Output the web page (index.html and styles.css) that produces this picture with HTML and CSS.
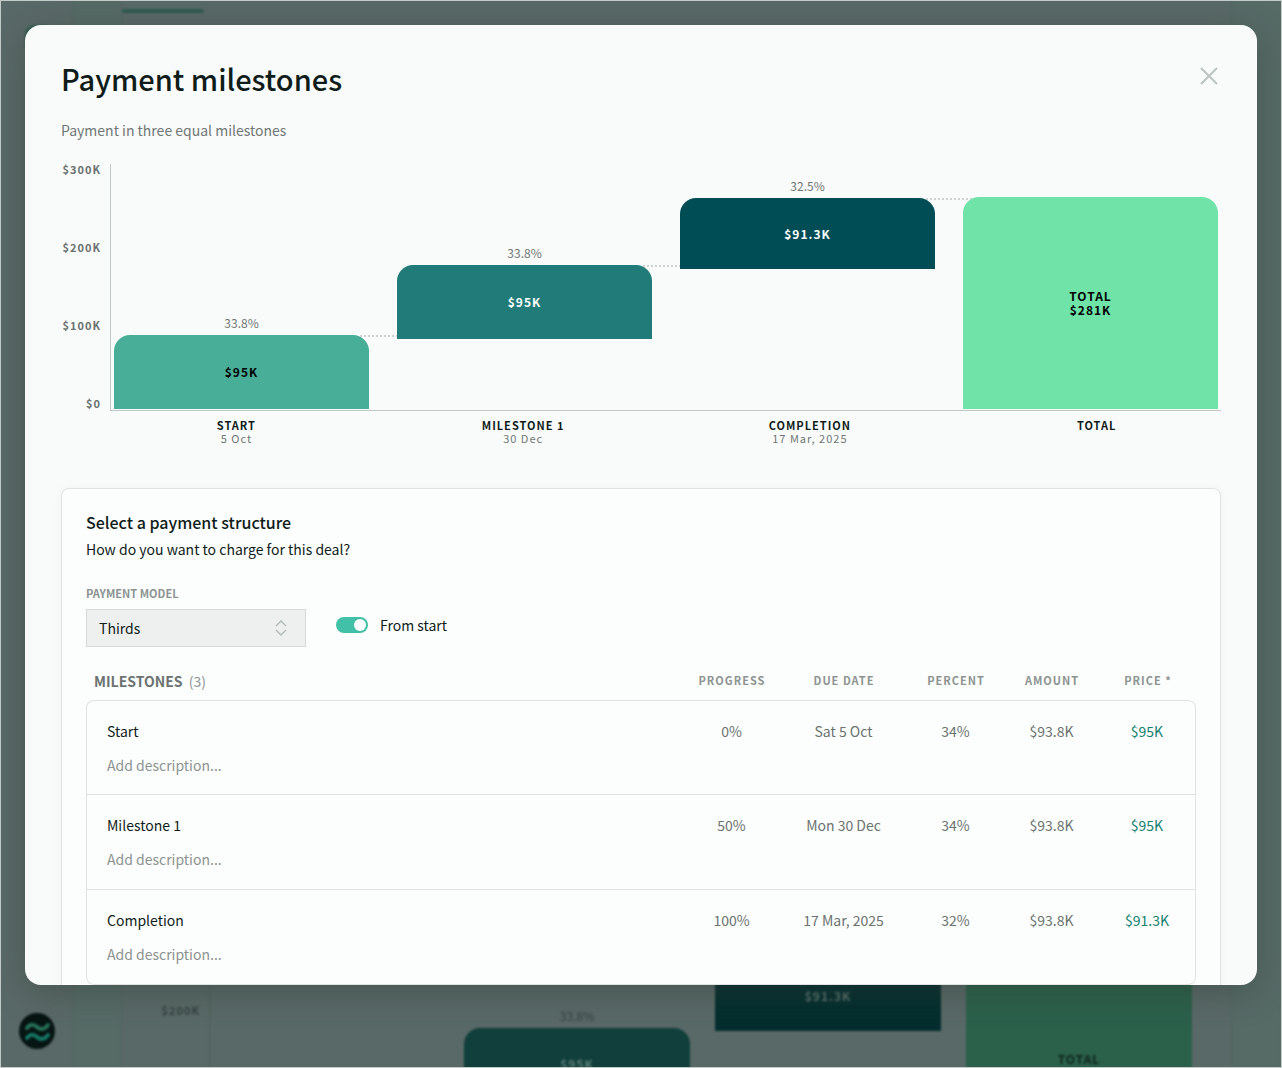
FILE: index.html
```html
<!DOCTYPE html>
<html lang="en">
<head>
<meta charset="utf-8">
<meta name="viewport" content="width=device-width, initial-scale=1">
<title>Payment milestones</title>
<link rel="stylesheet" href="styles.css">
</head>
<body>
<div class="stage">
  <div class="page" aria-hidden="true">
    <div class="page-rail">
      <div class="page-rail-top"></div>
      <svg class="page-logo" viewBox="0 0 36 36">
        <circle cx="18" cy="18" r="18" fill="#061412"/>
        <g fill="none" stroke-width="4" stroke-linecap="round">
          <path d="M8 15c4-5 8-3 10-1s7 4 11-2" stroke="#256f55"/>
          <path d="M8 25c4-5 8-3 10-1s7 4 11-2" stroke="#147563"/>
        </g>
      </svg>
    </div>
    <div class="page-gutter"></div>
    <div class="page-main">
      <div class="page-tab"></div>
      <div class="page-chart">
        <div class="page-axis">$200K</div>
        <div class="page-plot">
          <div class="page-col"></div>
          <div class="page-col page-col-mid"><span class="page-pct">33.8%</span><div class="page-bar page-bar-mid">$95K</div></div>
          <div class="page-col page-col-dark"><div class="page-bar page-bar-dark">$91.3K</div></div>
          <div class="page-col"><div class="page-bar page-bar-total">TOTAL</div></div>
        </div>
      </div>
    </div>
    <div class="page-edge"></div>
  </div>

  <div class="overlay">
    <section class="dialog" role="dialog" aria-modal="true" aria-labelledby="dialog-title">
      <header class="dialog-head">
        <h1 class="dialog-title" id="dialog-title">Payment milestones</h1>
        <button class="close" type="button" aria-label="Close">
          <svg viewBox="0 0 24 24" width="24" height="24"><path d="M4 4l16 16M20 4L4 20" fill="none" stroke="#bcc4c1" stroke-width="2"/></svg>
        </button>
      </header>
      <p class="dialog-sub">Payment in three equal milestones</p>

      <div class="chart">
        <div class="y-axis"><span>$300K</span><span>$200K</span><span>$100K</span><span>$0</span></div>
        <div class="plot">
          <div class="col linked"><span class="pct">33.8%</span><div class="bar bar-start" style="height:74px">$95K</div></div>
          <div class="col linked" style="padding-bottom:70px"><span class="pct">33.8%</span><div class="bar bar-mid" style="height:74px">$95K</div></div>
          <div class="col linked" style="padding-bottom:140px"><span class="pct">32.5%</span><div class="bar bar-end" style="height:71px">$91.3K</div></div>
          <div class="col"><div class="bar bar-total" style="height:212px"><span>TOTAL</span><span>$281K</span></div></div>
        </div>
        <div class="x-axis">
          <div class="x-label"><b>START</b><span>5 Oct</span></div>
          <div class="x-label"><b>MILESTONE 1</b><span>30 Dec</span></div>
          <div class="x-label"><b>COMPLETION</b><span>17 Mar, 2025</span></div>
          <div class="x-label"><b>TOTAL</b></div>
        </div>
      </div>

      <section class="panel">
        <h2 class="panel-title">Select a payment structure</h2>
        <p class="panel-text">How do you want to charge for this deal?</p>
        <form class="controls">
          <div class="field">
            <label class="field-label" for="model">PAYMENT MODEL</label>
            <div class="select-wrap">
              <select class="select" id="model"><option>Thirds</option></select>
              <svg class="select-icon" viewBox="0 0 12 16" width="12" height="16"><path d="M1 6l5-5 5 5M1 10l5 5 5-5" fill="none" stroke="#b3bbb8" stroke-width="1.4"/></svg>
            </div>
          </div>
          <label class="switch"><input class="switch-input" type="checkbox" checked>From start</label>
        </form>
        <table class="milestones">
          <thead>
            <tr>
              <th class="c-name">MILESTONES <span class="count">(3)</span></th>
              <th class="c-num">PROGRESS</th><th class="c-date">DUE DATE</th><th class="c-num">PERCENT</th><th class="c-num">AMOUNT</th><th class="c-num">PRICE *</th>
            </tr>
          </thead>
          <tbody>
            <tr>
              <td class="name">Start<input class="desc" type="text" placeholder="Add description..." aria-label="Description of Start"></td>
              <td>0%</td><td>Sat 5 Oct</td><td>34%</td><td>$93.8K</td><td class="price">$95K</td>
            </tr>
            <tr>
              <td class="name">Milestone 1<input class="desc" type="text" placeholder="Add description..." aria-label="Description of Milestone 1"></td>
              <td>50%</td><td>Mon 30 Dec</td><td>34%</td><td>$93.8K</td><td class="price">$95K</td>
            </tr>
            <tr>
              <td class="name">Completion<input class="desc" type="text" placeholder="Add description..." aria-label="Description of Completion"></td>
              <td>100%</td><td>17 Mar, 2025</td><td>32%</td><td>$93.8K</td><td class="price">$91.3K</td>
            </tr>
          </tbody>
        </table>
      </section>
    </section>
  </div>
</div>
</body>
</html>
```
FILE: styles.css
```css
* { box-sizing: border-box; }

body {
  margin: 0;
  font-family: "Noto Sans CJK SC", "Open Sans", sans-serif;
  font-size: 14px;
  line-height: 24px;
  color: #0f1c19;
}

h1, h2, p { margin: 0; }
b { font-weight: 700; }

/* The dimmed page and the dialog share one grid cell */
.stage {
  display: grid;
  grid-template: 100vh / 100%;
  border: 1px solid #c3cac7;
  height: 100vh;
  overflow: hidden;
  background: #596967;
}
.page, .overlay { grid-area: 1 / 1; min-height: 0; }

/* Dimmed page */
.page {
  display: grid;
  grid-template-columns: 72px 49px 1fr 50px;
  height: calc(100vh - 2px);
  filter: blur(1px);
}
.page-rail {
  display: flex;
  flex-direction: column;
  justify-content: space-between;
  padding: 24px 0 18px 18px;
}
.page-rail-top { width: 30px; height: 30px; border-radius: 10px; background: #2c5a4c; margin-left: 6px; }
.page-logo { width: 36px; height: 36px; }
.page-gutter { background: #566a66; border: solid #52645f; border-width: 0 1px; }
.page-main {
  display: flex;
  flex-direction: column;
  justify-content: space-between;
}
.page-tab { width: 82px; height: 4px; margin-top: 8px; background: #305a50; border-radius: 2px; }
.page-chart { display: grid; grid-template-columns: 88px 1fr; height: 120px; }
.page-axis {
  padding: 51px 9px 0 0;
  border-right: 1px solid #4e5f5a;
  font-size: 11px;
  font-weight: 700;
  letter-spacing: 1px;
  text-align: right;
  color: #34423f;
}
.page-plot {
  display: grid;
  grid-template-columns: repeat(4, 1fr);
  gap: 25px;
  padding: 0 39px 0 3px;
}
.page-col { display: flex; flex-direction: column; align-items: center; font-size: 12px; color: #34423f; }
.page-col-mid { padding-top: 57px; }
.page-bar {
  display: flex;
  justify-content: center;
  width: 100%;
  flex: 1;
  font-weight: 700;
  letter-spacing: 1px;
}
.page-bar-mid { padding-top: 24px; border-radius: 16px 16px 0 0; background: #113f3b; color: #5e7f79; }
.page-bar-dark { flex: none; height: 84px; padding-top: 37px; background: #042d2e; color: #58706c; }
.page-bar-total { padding-top: 100px; background: #2b604b; color: #0c241c; }
.page-edge { background: #566a66; border-left: 1px solid #52645f; }

/* Dialog */
.overlay { position: relative; z-index: 1; padding: 24px; }
.dialog {
  height: calc(100vh - 108px);
  padding: 36px;
  overflow-y: auto;
  scrollbar-width: none;
  border-radius: 16px;
  background: #f9fbfa;
  box-shadow: 0 8px 32px rgba(50, 60, 50, .4);
}
.dialog-head { display: flex; justify-content: space-between; align-items: flex-start; }
.dialog-title { font-size: 29px; line-height: 34px; font-weight: 500; }
.close {
  display: flex;
  margin-top: 3px;
  padding: 0;
  border: 0;
  background: none;
  cursor: pointer;
}
.dialog-sub { margin-top: 23px; color: #707775; }

/* Waterfall chart */
.chart {
  display: grid;
  grid-template-columns: 49px 1fr;
  margin-top: 22px;
}
.y-axis {
  display: flex;
  flex-direction: column;
  justify-content: space-between;
  padding: 0 9px 2px 0;
  text-align: right;
  font-size: 11px;
  line-height: 11px;
  font-weight: 700;
  letter-spacing: 1px;
  color: #6b7270;
}
.plot {
  display: grid;
  grid-template-columns: repeat(4, 1fr);
  gap: 28px;
  height: 247px;
  padding: 0 3px 1px;
  border: solid #c2c8c5;
  border-width: 0 0 1px 1px;
}
.col {
  display: flex;
  flex-direction: column;
  justify-content: flex-end;
  align-items: center;
}
.pct { font-size: 12px; line-height: 16px; margin-bottom: 4px; color: #707775; }
.bar {
  position: relative;
  z-index: 1;
  display: flex;
  flex-direction: column;
  justify-content: center;
  align-items: center;
  width: 100%;
  border-radius: 16px 16px 0 0;
  font-size: 12px;
  line-height: 14px;
  font-weight: 700;
  letter-spacing: 1px;
}
.linked .bar::after {
  content: "";
  position: absolute;
  z-index: -1;
  top: 0;
  left: calc(100% - 9px);
  width: 37px;
  height: 2px;
  background: repeating-linear-gradient(90deg, #cdd2d0 0 2px, transparent 2px 4px);
}
.linked:nth-child(3) .bar::after { width: 47px; }
.bar-start { background: #48ae98; color: #000; }
.bar-mid { background: #217c79; color: #fff; }
.bar-end { background: #004d56; color: #fff; }
.bar-total { background: #70e3a9; color: #000; }
.x-axis {
  grid-column: 2;
  display: grid;
  grid-template-columns: repeat(4, 1fr);
  margin: 8px -19px 0 -17px;
}
.x-label {
  display: flex;
  flex-direction: column;
  align-items: center;
  font-size: 11px;
  line-height: 13px;
  letter-spacing: 1px;
}
.x-label span { color: #707775; }

/* Payment structure */
.panel {
  margin-top: 43px;
  padding: 24px;
  border: 1px solid #dfe4e2;
  border-radius: 8px;
  background: #fcfefd;
  box-shadow: 0 0 8px rgba(0, 0, 0, .04);
}
.panel-title { font-size: 16px; line-height: 18px; font-weight: 500; }
.panel-text { margin-top: 6px; }
.controls { display: flex; gap: 30px; margin-top: 24px; }
.field { display: flex; flex-direction: column; width: 220px; }
.field-label { font-size: 11px; line-height: 16px; font-weight: 700; color: #8c9391; }
.select-wrap { position: relative; margin-top: 8px; }
.select {
  display: block;
  width: 100%;
  height: 38px;
  padding: 0 12px;
  appearance: none;
  border: 1px solid #d5dad8;
  border-radius: 0;
  background: #edf0ef;
  font: inherit;
  color: inherit;
}
.select-icon { position: absolute; right: 19px; top: 11px; pointer-events: none; }
.switch { display: flex; align-items: center; gap: 12px; height: 24px; margin-top: 28px; }
.switch-input {
  width: 32px;
  height: 16px;
  margin: 0;
  padding: 2px;
  appearance: none;
  border-radius: 8px;
  background: #42c1a8;
}
.switch-input::before {
  content: "";
  display: block;
  width: 12px;
  height: 12px;
  border-radius: 6px;
  background: #fff;
}
.switch-input:checked::before { margin-left: auto; }

.milestones {
  width: 100%;
  margin-top: 22px;
  table-layout: fixed;
  border-collapse: separate;
  border-spacing: 0;
}
.milestones th {
  height: 31px;
  padding: 0 0 10px;
  font-size: 11px;
  line-height: 20px;
  font-weight: 700;
  letter-spacing: 1px;
  color: #8c9391;
}
.milestones .c-name {
  padding: 0 0 8px 8px;
  text-align: left;
  font-size: 14px;
  letter-spacing: 0;
  color: #6b7270;
}
.count { margin-left: 3px; font-weight: 400; color: #8c9391; }
.c-num { width: 96px; }
.c-date { width: 128px; }
.milestones td {
  height: 95px;
  padding: 18px 1px 0 0;
  border-bottom: 1px solid #dfe4e2;
  vertical-align: top;
  text-align: center;
  color: #6b7270;
}
.milestones .name {
  padding-left: 20px;
  border-left: 1px solid #dfe4e2;
  text-align: left;
  color: #0f1c19;
}
.milestones .price { border-right: 1px solid #dfe4e2; color: #12806f; }
.milestones tbody tr:first-child td { border-top: 1px solid #dfe4e2; }
.milestones tbody tr:first-child .name { border-top-left-radius: 8px; }
.milestones tbody tr:first-child .price { border-top-right-radius: 8px; }
.milestones tbody tr:last-child .name { border-bottom-left-radius: 8px; }
.milestones tbody tr:last-child .price { border-bottom-right-radius: 8px; }
.desc {
  display: block;
  width: 100%;
  height: 24px;
  margin-top: 10px;
  padding: 0;
  border: 0;
  background: none;
  font: inherit;
}
.desc::placeholder { color: #8c9391; opacity: 1; }
```
